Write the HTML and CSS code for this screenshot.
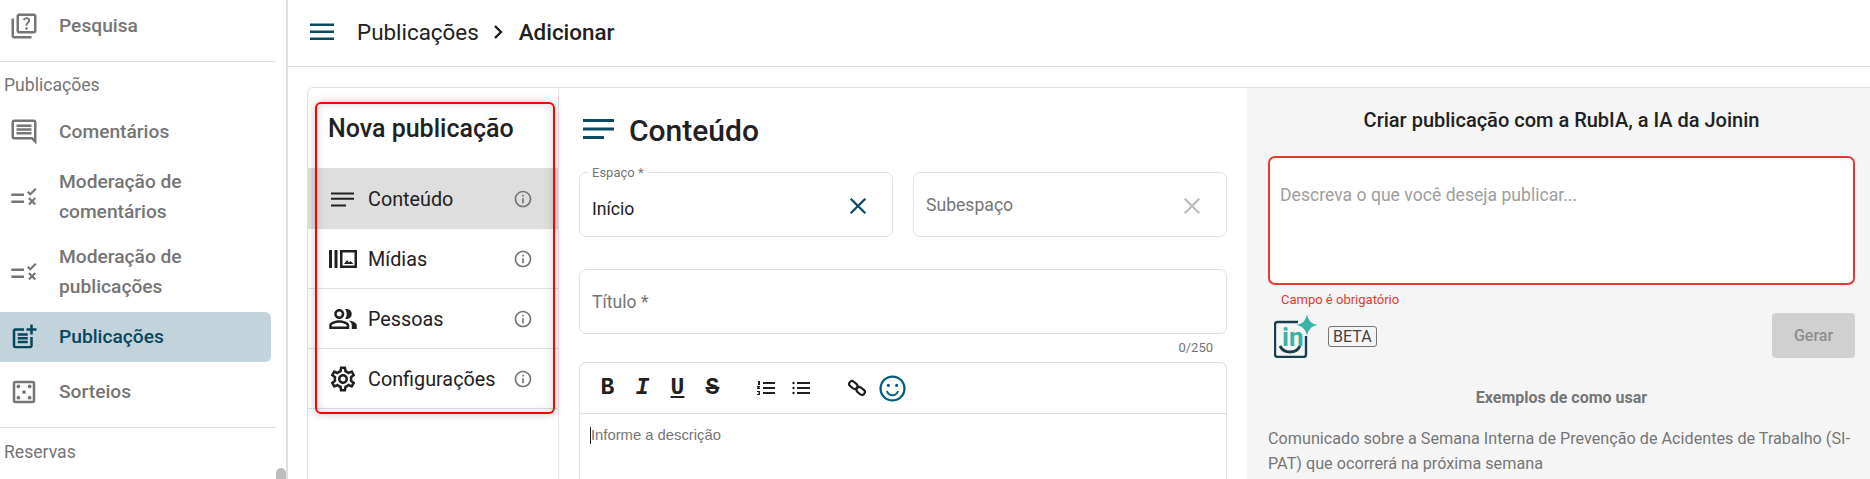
FILE: index.html
```html
<!DOCTYPE html>
<html lang="pt">
<head>
<meta charset="utf-8">
<title>Adicionar publicação</title>
<link rel="stylesheet" href="styles.css">
</head>
<body>
<div class="app">
  <aside class="sidebar">
    <div class="side-item first">
      <svg class="side-icon" viewBox="0 0 24 24"><path d="M4 6H2v14c0 1.1.9 2 2 2h14v-2H4V6zm16-4H8c-1.1 0-2 .9-2 2v12c0 1.1.9 2 2 2h12c1.1 0 2-.9 2-2V4c0-1.1-.9-2-2-2zm0 14H8V4h12v12zm-6.49-5.84c.41-.73 1.18-1.16 1.63-1.8.48-.68.21-1.94-1.14-1.94-.88 0-1.32.67-1.5 1.23l-1.37-.57C11.51 5.96 12.52 5 13.99 5c1.23 0 2.08.56 2.51 1.26.37.6.58 1.73.01 2.57-.63.93-1.23 1.21-1.56 1.81-.13.24-.18.4-.18 1.18h-1.52c.01-.41-.06-1.08.26-1.66zm-.56 3.79c0-.59.47-1.04 1.05-1.04.59 0 1.04.45 1.04 1.04 0 .58-.44 1.05-1.04 1.05-.58 0-1.05-.47-1.05-1.05z"/></svg>
      <span>Pesquisa</span>
    </div>
    <div class="side-divider"></div>
    <div class="side-label">Publicações</div>
    <div class="side-item comments">
      <svg class="side-icon" viewBox="0 0 24 24"><path d="M21.99 4c0-1.1-.89-2-1.99-2H4c-1.1 0-2 .9-2 2v12c0 1.1.9 2 2 2h14l4 4-.01-18zM20 4v13.17L18.83 16H4V4h16zM6 12h12v2H6zm0-3h12v2H6zm0-3h12v2H6z"/></svg>
      <span>Comentários</span>
    </div>
    <div class="side-item double">
      <svg class="side-icon" viewBox="-1 -1 26 26"><path d="M1 9h11v2.200H1zM1 15h11v2.200H1zM14.600 8.200l1.300-1.300 1.500 1.500 4.200-4.200 1.300 1.300-5.500 5.500zM15.600 13.600l1.300-1.300 2.100 2.100 2.100-2.100 1.300 1.300-2.100 2.100 2.100 2.100-1.300 1.300-2.100-2.100-2.100 2.100-1.300-1.300 2.100-2.100z"/></svg>
      <span>Moderação de comentários</span>
    </div>
    <div class="side-item double">
      <svg class="side-icon" viewBox="-1 -1 26 26"><path d="M1 9h11v2.200H1zM1 15h11v2.200H1zM14.600 8.200l1.300-1.300 1.500 1.500 4.200-4.200 1.300 1.300-5.500 5.500zM15.600 13.600l1.300-1.300 2.100 2.100 2.100-2.100 1.300 1.300-2.100 2.100 2.100 2.100-1.300 1.300-2.100-2.100-2.100 2.100-1.300-1.300 2.100-2.100z"/></svg>
      <span>Moderação de publicações</span>
    </div>
    <div class="side-item active">
      <svg class="side-icon" viewBox="0 0 24 24"><path d="M17 19.22H5V7h7V5H5c-1.1 0-2 .9-2 2v12c0 1.1.9 2 2 2h12c1.1 0 2-.9 2-2v-7h-2v7.22z"/><path d="M19 2h-2v3h-3c.01.01 0 2 0 2h3v2.99c.01.01 2 0 2 0V7h3V5h-3V2z"/><path d="M7 9h8v2H7zM7 12v2h8v-2h-3zM7 15h8v2H7z"/></svg>
      <span>Publicações</span>
    </div>
    <div class="side-item raffle">
      <svg class="side-icon" viewBox="0 0 24 24"><path d="M19 5v14H5V5h14m0-2H5c-1.1 0-2 .9-2 2v14c0 1.1.9 2 2 2h14c1.1 0 2-.9 2-2V5c0-1.1-.9-2-2-2z"/><circle cx="7.500" cy="7.500" r="1.500"/><circle cx="16.500" cy="7.500" r="1.500"/><circle cx="12" cy="12" r="1.500"/><circle cx="7.500" cy="16.500" r="1.500"/><circle cx="16.500" cy="16.500" r="1.500"/></svg>
      <span>Sorteios</span>
    </div>
    <div class="side-divider lower"></div>
    <div class="side-label">Reservas</div>
    <div class="scroll-thumb"></div>
  </aside>

  <div class="main">
    <header class="topbar">
      <svg class="menu-icon" viewBox="0 0 24 18"><path d="M0 .500h24v2.600H0zM0 7.500h24v2.600H0zM0 14.500h24v2.600H0z"/></svg>
      <span class="crumb">Publicações</span>
      <svg class="crumb-sep" viewBox="0 0 12 14"><path d="M2 1l6 6-6 6" fill="none" stroke="#1d1d1d" stroke-width="2.400"/></svg>
      <span class="crumb current">Adicionar</span>
    </header>

    <div class="content">
      <div class="card">
        <nav class="steps">
          <h2 class="steps-title">Nova publicação</h2>
          <div class="step selected">
            <svg class="step-icon" viewBox="-3 -3 30 30"><path d="M0 5.500h23v2.100H0zM0 10.700h23v2.100H0zM0 17.500h15v2.100H0z"/></svg>
            <span class="step-name">Conteúdo</span>
            <svg class="info" viewBox="0 0 24 24"><path d="M11 7h2v2h-2zm0 4h2v6h-2zm1-9C6.480 2 2 6.480 2 12s4.480 10 10 10 10-4.480 10-10S17.520 2 12 2zm0 18c-4.410 0-8-3.590-8-8s3.590-8 8-8 8 3.590 8 8-3.590 8-8 8z"/></svg>
          </div>
          <div class="step">
            <svg class="step-icon" viewBox="0 -3 30 30"><path d="M1 3h3v18H1zM6.500 3h3v18h-3z"/><path d="M12 3h17v18H12zm2.500 2.500v13h12v-13z" fill-rule="evenodd"/><path d="M16 17l3-4 2 2.500 1.500-1.500 3 3z"/></svg>
            <span class="step-name">Mídias</span>
            <svg class="info" viewBox="0 0 24 24"><path d="M11 7h2v2h-2zm0 4h2v6h-2zm1-9C6.480 2 2 6.480 2 12s4.480 10 10 10 10-4.480 10-10S17.520 2 12 2zm0 18c-4.410 0-8-3.590-8-8s3.590-8 8-8 8 3.590 8 8-3.590 8-8 8z"/></svg>
          </div>
          <div class="step">
            <svg class="step-icon" viewBox="0 0 24 24"><path d="M16.670 13.130C18.040 14.060 19 15.320 19 17v3h4v-3c0-2.180-3.570-3.470-6.330-3.870z"/><path d="M15 12c2.210 0 4-1.790 4-4s-1.790-4-4-4c-.47 0-.91.1-1.330.24C14.500 5.270 15 6.580 15 8s-.5 2.730-1.330 3.760c.42.14.86.24 1.330.24z"/><path d="M9 12c2.210 0 4-1.790 4-4s-1.790-4-4-4-4 1.790-4 4 1.790 4 4 4zm0-6c1.100 0 2 .9 2 2s-.9 2-2 2-2-.9-2-2 .9-2 2-2z"/><path d="M9 13c-2.670 0-8 1.340-8 4v3h16v-3c0-2.660-5.330-4-8-4zm6 5H3v-.99C3.200 16.290 6.300 15 9 15s5.800 1.290 6 2v1z"/></svg>
            <span class="step-name">Pessoas</span>
            <svg class="info" viewBox="0 0 24 24"><path d="M11 7h2v2h-2zm0 4h2v6h-2zm1-9C6.480 2 2 6.480 2 12s4.480 10 10 10 10-4.480 10-10S17.520 2 12 2zm0 18c-4.410 0-8-3.590-8-8s3.590-8 8-8 8 3.590 8 8-3.590 8-8 8z"/></svg>
          </div>
          <div class="step">
            <svg class="step-icon" viewBox="0 0 24 24"><path d="M19.43 12.98c.04-.32.07-.64.07-.98 0-.34-.03-.66-.07-.98l2.11-1.65c.19-.15.24-.42.12-.64l-2-3.46c-.09-.16-.26-.25-.44-.25-.06 0-.12.01-.17.03l-2.49 1c-.52-.4-1.08-.73-1.69-.98l-.38-2.65C14.46 2.18 14.25 2 14 2h-4c-.25 0-.46.18-.49.42l-.38 2.65c-.61.25-1.17.59-1.69.98l-2.49-1c-.06-.02-.12-.03-.18-.03-.17 0-.34.09-.43.25l-2 3.46c-.13.22-.07.49.12.64l2.11 1.65c-.04.32-.07.65-.07.98 0 .33.03.66.07.98l-2.11 1.65c-.19.15-.24.42-.12.64l2 3.46c.09.16.26.25.44.25.06 0 .12-.01.17-.03l2.49-1c.52.4 1.08.73 1.69.98l.38 2.65c.03.24.24.42.49.42h4c.25 0 .46-.18.49-.42l.38-2.65c.61-.25 1.17-.59 1.69-.98l2.49 1c.06.02.12.03.18.03.17 0 .34-.09.43-.25l2-3.46c.12-.22.07-.49-.12-.64l-2.11-1.65zm-1.98-1.71c.04.31.05.52.05.73 0 .21-.02.43-.05.73l-.14 1.13.89.7 1.08.84-.7 1.21-1.27-.51-1.04-.42-.9.68c-.43.32-.84.56-1.25.73l-1.06.43-.16 1.13-.2 1.35h-1.4l-.19-1.35-.16-1.13-1.06-.43c-.43-.18-.83-.41-1.23-.71l-.91-.7-1.06.43-1.27.51-.7-1.21 1.08-.84.89-.7-.14-1.13c-.03-.31-.05-.54-.05-.74s.02-.43.05-.73l.14-1.13-.89-.7-1.08-.84.7-1.21 1.27.51 1.04.42.9-.68c.43-.32.84-.56 1.25-.73l1.06-.43.16-1.13.2-1.35h1.39l.19 1.35.16 1.13 1.06.43c.43.18.83.41 1.23.71l.91.7 1.06-.43 1.27-.51.7 1.21-1.07.85-.89.7.14 1.13zM12 8c-2.21 0-4 1.79-4 4s1.79 4 4 4 4-1.79 4-4-1.79-4-4-4zm0 6c-1.1 0-2-.9-2-2s.9-2 2-2 2 .9 2 2-.9 2-2 2z"/></svg>
            <span class="step-name">Configurações</span>
            <svg class="info" viewBox="0 0 24 24"><path d="M11 7h2v2h-2zm0 4h2v6h-2zm1-9C6.480 2 2 6.480 2 12s4.480 10 10 10 10-4.480 10-10S17.520 2 12 2zm0 18c-4.410 0-8-3.590-8-8s3.590-8 8-8 8 3.590 8 8-3.590 8-8 8z"/></svg>
          </div>
          <div class="highlight"></div>
        </nav>

        <section class="form">
          <div class="form-head">
            <svg class="form-icon" viewBox="0 0 31 20"><path d="M0 0h31v3H0zM0 8.500h31v3H0zM0 17h21v3H0z"/></svg>
            <h1 class="form-title">Conteúdo</h1>
          </div>
          <div class="field-row">
            <div class="field">
              <span class="float-label">Espaço *</span>
              <span class="field-value">Início</span>
              <svg class="clear" viewBox="0 0 16 16"><path d="M1.500 1.500l13 13M14.500 1.500l-13 13" fill="none" stroke="#0b4a60" stroke-width="2"/></svg>
            </div>
            <div class="field">
              <span class="field-placeholder raised">Subespaço</span>
              <svg class="clear" viewBox="0 0 16 16"><path d="M1.500 1.500l13 13M14.500 1.500l-13 13" fill="none" stroke="#bdbdbd" stroke-width="2"/></svg>
            </div>
          </div>
          <div class="field full">
            <span class="field-placeholder">Título *</span>
          </div>
          <div class="counter">0/250</div>
          <div class="editor">
            <div class="toolbar">
              <span class="tool bold">B</span>
              <span class="tool ital">I</span>
              <span class="tool under">U</span>
              <span class="tool strike">S</span>
              <svg class="tool-svg olist" viewBox="0 0 18 14"><path d="M6 1h12v2H6zM6 6h12v2H6zM6 11h12v2H6zM1 0h2v4H1zM0 5h3v1.500H2v.500H3v1H0V6.500h1V6H0zM0 10h3v4H0v-1h2v-.500H1v-1h1V11H0z"/></svg>
              <svg class="tool-svg ulist" viewBox="0 0 18 14"><path d="M5 1h13v2H5zM5 6h13v2H5zM5 11h13v2H5z"/><circle cx="1.500" cy="2" r="1.200"/><circle cx="1.500" cy="7" r="1.200"/><circle cx="1.500" cy="12" r="1.200"/></svg>
              <svg class="tool-svg link" viewBox="0 0 18 18"><g fill="none" stroke="#1d1d1d" stroke-width="2.200"><rect x="0.800" y="3.200" width="9" height="5.600" rx="2.800" transform="rotate(40 5.300 6)"/><rect x="8.200" y="9.200" width="9" height="5.600" rx="2.800" transform="rotate(40 12.700 12)"/></g></svg>
              <svg class="tool-svg smile" viewBox="0 0 26 26"><circle cx="13" cy="13" r="11.500" fill="none" stroke="#005b7f" stroke-width="2.200"/><circle cx="9" cy="10" r="1.500" fill="#005b7f"/><circle cx="17" cy="10" r="1.500" fill="#005b7f"/><path d="M7.500 15.500c1.500 3 3.500 4 5.500 4s4-1 5.500-4" fill="none" stroke="#005b7f" stroke-width="1.800"/></svg>
            </div>
            <div class="editor-body"><span class="caret"></span>Informe a descrição</div>
          </div>
        </section>

        <section class="assistant">
          <h2 class="assist-title">Criar publicação com a RubIA, a IA da Joinin</h2>
          <div class="prompt">Descreva o que você deseja publicar...</div>
          <div class="prompt-error">Campo é obrigatório</div>
          <div class="assist-actions">
            <svg class="logo" viewBox="0 0 44 44"><path d="M24 8H3.500A2.500 2.500 0 0 0 1 10.500v30A2.500 2.500 0 0 0 3.500 43h26a2.500 2.500 0 0 0 2.500-2.500V22" fill="none" stroke="#173f50" stroke-width="2.400"/><path d="M6 32c2 4 5.500 6 10 6s8-2 10-6" fill="none" stroke="#173f50" stroke-width="2.800"/><text x="8" y="32" class="logo-in">in</text><path d="M33 0c1 6 4 10 11 11-7 1-10 5-11 11-1-6-4-10-11-11 7-1 10-5 11-11z" fill="#38b3a6"/></svg>
            <span class="beta">BETA</span>
            <span class="generate">Gerar</span>
          </div>
          <h3 class="examples-title">Exemplos de como usar</h3>
          <p class="example">Comunicado sobre a Semana Interna de Prevenção de Acidentes de Trabalho (SI-PAT) que ocorrerá na próxima semana</p>
        </section>
      </div>
    </div>
  </div>
</div>
</body>
</html>
```

FILE: styles.css
```css
* { box-sizing: border-box; }

html, body {
  margin: 0;
  height: 479px;
  overflow: hidden;
  background: #fff;
  font-family: Roboto, "Noto Sans", sans-serif;
  color: #212121;
}

.app {
  display: flex;
  height: 479px;
}

/* Sidebar */
.sidebar {
  position: relative;
  flex: 0 0 288px;
  border-right: 2px solid #e0e0e0;
  overflow: hidden;
}

.side-item {
  display: flex;
  align-items: center;
  width: 271px;
  padding-left: 9px;
  font-size: 19.200px;
  font-weight: 500;
  color: #757575;
  line-height: 30px;
}

.side-item span { margin-left: 20px; }

.side-icon {
  flex: 0 0 30px;
  width: 30px;
  height: 30px;
  fill: #757575;
}

.side-item.first { height: 52px; }
.side-item.comments { height: 50px; margin-top: 12px; }
.side-item.double { height: 60px; margin-top: 10px; }
.side-item.double + .side-item.double { margin-top: 15px; }

.side-item.active {
  height: 50px;
  margin-top: 10px;
  color: #08465c;
  background: #c3d3db;
  border-radius: 0 6px 6px 0;
}
.side-item.active .side-icon { fill: #08465c; }
.side-item.raffle { height: 50px; margin-top: 5px; }

.side-divider {
  width: 276px;
  height: 1px;
  margin-top: 9px;
  background: #e0e0e0;
}
.side-divider.lower { margin-top: 10px; }

.side-label {
  padding: 13px 0 0 4px;
  font-size: 17.600px;
  line-height: 20px;
  color: #757575;
}
.side-divider.lower + .side-label { padding-top: 14px; }

.scroll-thumb {
  position: absolute;
  right: 0;
  bottom: 0;
  width: 10px;
  height: 11px;
  border-radius: 5px 5px 0 0;
  background: #bdbdbd;
}

/* Top bar */
.main {
  flex: 1;
  min-width: 0;
  display: flex;
  flex-direction: column;
}

.topbar {
  display: flex;
  align-items: center;
  flex: 0 0 67px;
  padding: 0 0 3px 22px;
  border-bottom: 1px solid #e0e0e0;
}

.menu-icon {
  width: 24px;
  height: 18px;
  fill: #0b4a60;
  margin-right: 23px;
}

.crumb {
  font-size: 22.400px;
  color: #212121;
}
.crumb.current { font-weight: 500; }

.crumb-sep {
  width: 12px;
  height: 14px;
  margin: 0 14px 0 14px;
}

/* Card */
.content {
  flex: 1;
  min-height: 0;
  padding: 20px 0 0 19px;
}

.card {
  display: flex;
  height: 392px;
  overflow: hidden;
  border: 1px solid #e0e0e0;
  border-right: 0;
  border-bottom: 0;
  border-radius: 6px 0 0 0;
}

.steps {
  position: relative;
  flex: 0 0 251px;
  border-right: 1px solid #e0e0e0;
}

.steps-title {
  margin: 0;
  padding: 25px 0 0 20px;
  height: 80px;
  font-size: 25px;
  line-height: 32px;
  font-weight: 500;
  color: #212121;
}

.step {
  display: flex;
  align-items: center;
  height: 60px;
  padding: 0 25px 0 20px;
  border-bottom: 1px solid #e0e0e0;
}

.step.selected {
  height: 61px;
  background: #dedede;
  border-bottom: 0;
}

.step-icon {
  flex: 0 0 30px;
  width: 30px;
  height: 30px;
  fill: #212121;
}

.step-name {
  flex: 1;
  margin-left: 10px;
  padding-top: 2px;
  font-size: 19.800px;
  color: #212121;
}

.info {
  width: 20px;
  height: 20px;
  fill: #757575;
}

.highlight {
  position: absolute;
  left: 7px;
  top: 14px;
  width: 240px;
  height: 312px;
  border: 2px solid #f00;
  border-radius: 6px;
  box-shadow: 0 0 8px rgba(0, 0, 0, .22), inset 0 0 10px rgba(0, 0, 0, .16);
  pointer-events: none;
}

/* Form column */
.form {
  flex: 0 0 688px;
  padding: 0 20px;
}

.form-head {
  display: flex;
  align-items: center;
  height: 84px;
  padding-left: 4px;
}

.form-icon {
  width: 31px;
  height: 20px;
  margin-top: -2px;
  fill: #0b4a60;
  margin-right: 15px;
}

.form-title {
  margin: 0;
  font-size: 30px;
  font-weight: 500;
  color: #212121;
}

.field-row {
  display: flex;
  gap: 20px;
  margin-bottom: 32px;
}

.field {
  position: relative;
  display: flex;
  align-items: center;
  flex: 1;
  height: 65px;
  padding: 0 12px;
  border: 1px solid #e0e0e0;
  border-radius: 7px;
}

.float-label {
  position: absolute;
  left: 8px;
  top: -8px;
  padding: 0 4px;
  background: #fff;
  font-size: 13px;
  line-height: 16px;
  color: #757575;
}

.field-value {
  flex: 1;
  padding-top: 9px;
  font-size: 17.600px;
}

.field-placeholder {
  flex: 1;
  font-size: 17.600px;
  color: #757575;
}
.field-placeholder.raised { padding-top: 1px; }

.clear {
  width: 18px;
  height: 18px;
  margin-right: 13px;
  margin-top: 2px;
}

.counter {
  height: 28px;
  padding: 6px 14px 0 0;
  text-align: right;
  font-size: 13px;
  line-height: 16px;
  color: #757575;
}

.editor {
  height: 117px;
  border: 1px solid #e0e0e0;
  border-bottom: 0;
  border-radius: 7px 7px 0 0;
}

.toolbar {
  display: flex;
  align-items: center;
  height: 51px;
  padding-left: 19px;
  border-bottom: 1px solid #e0e0e0;
}

.tool {
  width: 17px;
  margin-right: 18px;
  text-align: center;
  font-family: "Liberation Mono", monospace;
  font-size: 23px;
  line-height: 24px;
  font-weight: 700;
  color: #212121;
}
.tool.ital { font-style: italic; }
.tool.under { text-decoration: underline; }
.tool.strike { text-decoration: line-through; margin-right: 36px; }

.tool-svg { flex: none; fill: #212121; }
.olist { width: 18px; height: 14px; margin-right: 17px; }
.ulist { width: 18px; height: 14px; margin-right: 38px; }
.link { width: 18px; height: 18px; margin-right: 13px; }
.smile { width: 27px; height: 27px; }

.editor-body {
  display: flex;
  align-items: center;
  height: 20px;
  margin-top: 11px;
  padding-left: 10px;
  font-family: "Liberation Sans", sans-serif;
  font-size: 14.800px;
  color: #757575;
}

.caret {
  width: 1px;
  height: 17px;
  background: #212121;
}

/* Assistant column */
.assistant {
  flex: 1;
  min-width: 0;
  padding: 18px 15px 0 21px;
  background: #f5f5f5;
}

.assist-title {
  margin: 0;
  height: 50px;
  text-align: center;
  font-size: 20px;
  line-height: 28px;
  font-weight: 500;
  color: #212121;
}

.prompt {
  height: 129px;
  padding: 24px 10px;
  border: 2px solid #e53935;
  border-radius: 7px;
  background: #fff;
  font-size: 17.600px;
  line-height: 26px;
  color: #9e9e9e;
}

.prompt-error {
  height: 28px;
  padding: 7px 0 0 13px;
  font-size: 13px;
  line-height: 16px;
  color: #e53935;
}

.assist-actions {
  display: flex;
  align-items: center;
  height: 45px;
}

.logo { width: 44px; height: 44px; margin-left: 6px; }

.logo-in {
  font-family: Roboto, sans-serif;
  font-size: 26px;
  font-weight: 700;
  fill: #38b3a6;
}

.beta {
  margin: 2px 0 0 10px;
  padding: 0 4px;
  border: 1px solid #757575;
  border-radius: 3px;
  font-size: 16px;
  line-height: 19px;
  color: #424242;
}

.generate {
  margin-left: auto;
  width: 83px;
  height: 45px;
  border-radius: 4px;
  background: #d0d0d0;
  text-align: center;
  font-size: 16px;
  line-height: 45px;
  font-weight: 500;
  color: #8e8e8e;
}

.examples-title {
  margin: 28px 0 0;
  text-align: center;
  font-size: 16px;
  line-height: 24px;
  font-weight: 700;
  color: #757575;
}

.example {
  margin: 16px 0 0;
  font-size: 16.200px;
  line-height: 25px;
  color: #757575;
}
```
